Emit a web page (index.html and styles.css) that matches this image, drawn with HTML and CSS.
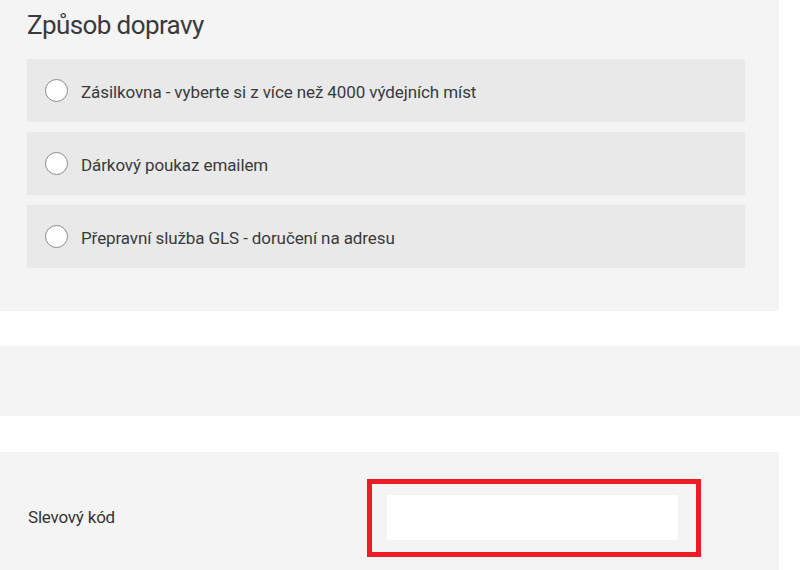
FILE: index.html
```html
<!DOCTYPE html>
<html lang="cs">
<head>
    <meta charset="UTF-8">
    <meta name="viewport" content="width=device-width, initial-scale=1.0">
    <title>Způsob dopravy</title>
    <link rel="stylesheet" href="styles.css">
</head>
<body>
    <div class="panel shipping">
        <h2>Způsob dopravy</h2>
        <div class="options">
            <label class="option">
                <span class="radio"></span>
                <span class="text">Zásilkovna - vyberte si z více než 4000 výdejních míst</span>
            </label>
            <label class="option">
                <span class="radio"></span>
                <span class="text">Dárkový poukaz emailem</span>
            </label>
            <label class="option">
                <span class="radio"></span>
                <span class="text">Přepravní služba GLS - doručení na adresu</span>
            </label>
        </div>
    </div>

    <div class="band"></div>

    <div class="panel discount">
        <span class="label">Slevový kód</span>
        <div class="highlight">
            <div class="code-input"></div>
        </div>
    </div>
</body>
</html>
```

FILE: styles.css
```css
body {
    margin: 0;
    background: #fff;
    font-family: Roboto, "Liberation Sans", sans-serif;
    color: #333;
}
.panel {
    width: 779px;
    background: #f4f4f4;
    box-sizing: border-box;
}
.shipping {
    height: 311px;
    padding: 10px 34px 0 27px;
}
h2 {
    margin: 0 0 19px;
    font-size: 26px;
    line-height: 30px;
    font-weight: 400;
    letter-spacing: -0.6px;
    color: #3a3a3c;
}
.options {
    display: flex;
    flex-direction: column;
    gap: 10px;
}
.option {
    display: flex;
    align-items: center;
    height: 63px;
    padding-left: 18px;
    background: #e9e9e9;
    font-size: 17px;
    letter-spacing: -0.1px;
    color: #3a3a3c;
}
.text {
    padding-top: 2px;
}
.radio {
    width: 21px;
    height: 21px;
    border: 1px solid #8a8a8a;
    border-radius: 50%;
    background: #fff;
    margin-right: 13px;
    flex: none;
}
.band {
    margin-top: 35px;
    height: 70px;
    background: #f4f4f4;
}
.discount {
    margin-top: 36px;
    height: 140px;
    padding: 27px 0 0 28px;
    display: grid;
    grid-template-columns: 339px auto;
    align-items: start;
}
.label {
    margin-top: 28px;
    font-size: 17px;
    letter-spacing: -0.2px;
    color: #333;
}
.highlight {
    width: 334px;
    height: 78px;
    box-sizing: border-box;
    border: 5px solid #ed1c24;
    padding: 11px 0 0 15px;
}
.code-input {
    width: 291px;
    height: 45px;
    background: #fff;
}
```
